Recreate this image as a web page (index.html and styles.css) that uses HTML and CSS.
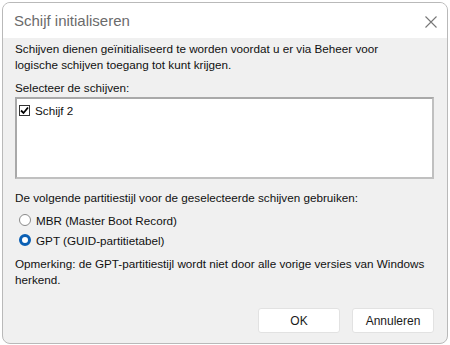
FILE: index.html
```html
<!DOCTYPE html>
<html lang="nl">
<head>
  <meta charset="UTF-8">
  <title>Schijf initialiseren</title>
  <link rel="stylesheet" href="styles.css">
</head>
<body>
  <div class="window">
    <div class="titlebar">
      <span class="title">Schijf initialiseren</span>
      <svg class="close" width="12" height="12" viewBox="0 0 12 12">
        <path d="M0.5 0.5 L11.5 11.5 M11.5 0.5 L0.5 11.5" stroke="#777" stroke-width="1.1" fill="none"/>
      </svg>
    </div>
    <div class="content">
      <p class="intro">Schijven dienen geïnitialiseerd te worden voordat u er via Beheer voor<br>logische schijven toegang tot kunt krijgen.</p>
      <p class="label">Selecteer de schijven:</p>
      <div class="listbox">
        <label class="item">
          <span class="check">
            <svg width="9" height="9" viewBox="0 0 9 9"><path d="M1 4.5 L3.5 7 L8 1.5" stroke="#000" stroke-width="1.8" fill="none"/></svg>
          </span>
          Schijf 2
        </label>
      </div>
      <p class="label style">De volgende partitiestijl voor de geselecteerde schijven gebruiken:</p>
      <label class="radio"><span class="dot"></span>MBR (Master Boot Record)</label>
      <label class="radio"><span class="dot on"></span>GPT (GUID-partitietabel)</label>
      <p class="note">Opmerking: de GPT-partitiestijl wordt niet door alle vorige versies van Windows<br>herkend.</p>
      <div class="buttons">
        <button>OK</button>
        <button>Annuleren</button>
      </div>
    </div>
  </div>
</body>
</html>
```

FILE: styles.css
```css
body {
  margin: 0;
  background: #fff;
  font-family: "Liberation Sans", Arial, sans-serif;
  font-size: 11.7px;
  color: #111;
}
.window {
  margin: 2px 2px 0 2px;
  height: 340px;
  border: 1px solid #b9b9b9;
  border-radius: 8px;
  overflow: hidden;
  background: #f0f0f0;
  display: flex;
  flex-direction: column;
}
.titlebar {
  height: 35px;
  background: #fff;
  display: flex;
  align-items: center;
  justify-content: space-between;
  padding: 0 10px 0 11px;
  flex-shrink: 0;
}
.title {
  font-size: 15px;
  color: #6b6b6b;
}
.close {
  margin-top: 2px;
}
.content {
  padding: 3px 13px 0 12px;
  display: flex;
  flex-direction: column;
  white-space: nowrap;
}
p {
  margin: 0;
  line-height: 16px;
}
.intro {
  margin-bottom: 7px;
}
.listbox {
  margin-top: 1px;
  height: 82px;
  box-sizing: border-box;
  background: #fff;
  border: 2px solid #a9a9a9;
  border-right-color: #c0c0c0;
  border-bottom-color: #c0c0c0;
  padding: 3px 2px;
}
.item {
  display: flex;
  align-items: center;
  gap: 5px;
  height: 16px;
}
.check {
  width: 11px;
  height: 11px;
  border: 1px solid #333;
  box-sizing: border-box;
  display: flex;
  align-items: center;
  justify-content: center;
  background: #fff;
}
.style {
  margin-top: 11px;
  margin-bottom: 4px;
}
.radio {
  display: flex;
  align-items: center;
  gap: 5px;
  height: 20px;
  padding-left: 4px;
}
.dot {
  width: 12px;
  height: 12px;
  border-radius: 50%;
  border: 1px solid #8a8a8a;
  box-sizing: border-box;
  background: #fff;
}
.dot.on {
  border: 3.5px solid #0a5fb4;
}
.note {
  margin-top: 6px;
}
.buttons {
  display: flex;
  justify-content: flex-end;
  gap: 12px;
  margin-top: 20px;
}
button {
  width: 82px;
  height: 25px;
  background: #fff;
  border: 1px solid #e2e2e2;
  border-radius: 3px;
  font-family: inherit;
  font-size: 12px;
  color: #1a1a1a;
}
```
